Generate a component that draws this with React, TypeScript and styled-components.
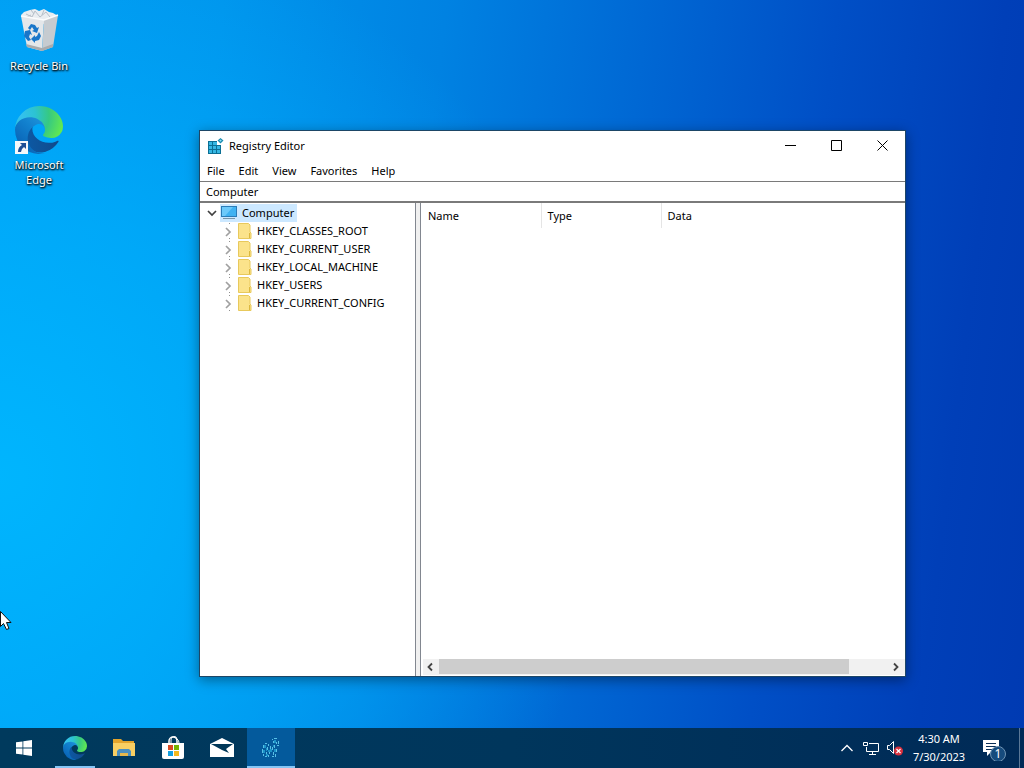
import React from "react";
import styled, { createGlobalStyle, css } from "styled-components";

const GlobalStyle = createGlobalStyle`
  *, *::before, *::after { box-sizing: border-box; }
  html, body { margin: 0; padding: 0; }
  body, button, input, table {
    font-family: "Noto Sans", "Open Sans", sans-serif;
    font-size: 11px;
    line-height: 18px;
  }
  button {
    margin: 0;
    padding: 0;
    border: 0;
    background: none;
    color: inherit;
    cursor: default;
  }
  svg { display: block; flex: none; }
`;

const Screen = styled.div`
  display: flex;
  flex-direction: column;
  min-height: 100vh;
  overflow: hidden;
  background:
    radial-gradient(ellipse 60% 75% at 0% 62%, rgba(0, 184, 255, 0.9) 0%, rgba(0, 180, 255, 0.6) 45%, rgba(0, 170, 250, 0) 100%),
    linear-gradient(97deg, #009cf2 0%, #0094ec 20%, #0082e2 40%, #0068d4 58%, #004fc6 75%, #003fb8 90%, #003ab2 100%);
`;

const Desktop = styled.main`
  position: relative;
  flex: 1;
  padding: 6px 1px;
`;

const Shortcuts = styled.nav`
  display: flex;
  flex-direction: column;
  width: 76px;
  gap: 26px;
`;

const Shortcut = styled.button`
  display: flex;
  flex-direction: column;
  align-items: center;
  gap: 3px;
  min-height: 74px;
  color: #fff;
  font-size: 11px;
  line-height: 15px;
  text-shadow: 0 1px 2px #000, 1px 1px 2px #000;
`;

const Pointer = styled.svg`
  position: absolute;
  left: 0;
  top: 611px;
`;

const Window = styled.section`
  position: absolute;
  inset: 130px 118px 51px 199px;
  display: flex;
  flex-direction: column;
  border: 1px solid #1d4666;
  background: #fff;
  color: #000;
  box-shadow: 0 3px 12px rgba(0, 0, 0, 0.4);
`;

const TitleBar = styled.header`
  display: flex;
  align-items: center;
  gap: 5px;
  height: 30px;
  padding-left: 8px;
`;

const Title = styled.h1`
  flex: 1;
  margin: 0;
  font-size: 11px;
  font-weight: 400;
`;

const WindowControls = styled.div`
  display: flex;
  align-self: flex-start;
`;

const WindowButton = styled.button`
  display: grid;
  place-items: center;
  width: 46px;
  height: 29px;
`;

const MenuBar = styled.nav`
  display: flex;
  height: 20px;
`;

const MenuButton = styled.button`
  padding: 0 7px;
`;

const AddressBar = styled.input`
  height: 22px;
  padding: 0 6px;
  border: solid #7a7a7a;
  border-width: 1px 0 2px;
  outline: 0;
  background: #fff;
  color: #000;
`;

const Panes = styled.div`
  display: flex;
  flex: 1;
  min-height: 0;
`;

const TreePane = styled.div`
  width: 215px;
  padding-top: 1px;
`;

const Splitter = styled.div`
  width: 6px;
  border: solid #828790;
  border-width: 0 1px;
  background: #f0f0f0;
`;

const Tree = styled.ul`
  margin: 0;
  padding: 0;
  list-style: none;
`;

const TreeRow = styled.div<{ $depth: number }>`
  display: flex;
  align-items: center;
  height: 18px;
  padding-left: ${(p) => 4 + p.$depth * 17}px;
`;

const Expander = styled.button`
  display: grid;
  place-items: center;
  width: 16px;
  height: 18px;
`;

const TreeLabel = styled.span<{ $selected?: boolean }>`
  display: flex;
  align-items: center;
  gap: 5px;
  height: 18px;
  padding: 0 3px 0 1px;
  ${(p) => p.$selected && css`background: #cce8ff;`}
`;

const ValuePane = styled.div`
  display: flex;
  flex: 1;
  flex-direction: column;
  min-width: 0;
  padding-bottom: 1px;
`;

const ValueArea = styled.div`
  flex: 1;
`;

const ValueTable = styled.table`
  width: 100%;
  border-collapse: collapse;
  table-layout: fixed;
`;

const ColumnHead = styled.th<{ $width?: number }>`
  width: ${(p) => (p.$width ? `${p.$width}px` : "auto")};
  height: 25px;
  padding: 0 7px;
  font-weight: 400;
  text-align: left;
  & + & { padding-left: 6px; border-left: 1px solid #e5e5e5; }
`;

const ScrollBar = styled.div`
  display: flex;
  height: 16px;
  margin-left: 2px;
  background: #f1f1f1;
`;

const ScrollButton = styled.button`
  display: grid;
  place-items: center;
  width: 16px;
`;

const ScrollTrack = styled.div`
  flex: 1;
`;

const ScrollThumb = styled.div`
  width: 91%;
  height: 15px;
  background: #cdcdcd;
`;

const TaskBar = styled.footer`
  display: flex;
  height: 40px;
  background: linear-gradient(90deg, #003a5d 0%, #00365c 50%, #002a57 100%);
  color: #fff;
`;

const PinnedApps = styled.nav`
  display: flex;
  flex: 1;
  gap: 1px;
  padding-left: 3px;
`;

const TaskButton = styled.button<{ $open?: boolean; $active?: boolean }>`
  position: relative;
  display: grid;
  place-items: center;
  width: 48px;
  background: ${(p) => (p.$active ? "#045a9c" : "transparent")};
  ${(p) =>
    (p.$open || p.$active) &&
    css`
      &::after {
        content: "";
        position: absolute;
        inset: auto ${p.$active ? 0 : 4}px 0;
        height: 2px;
        background: #85c5f5;
      }
    `}
`;

const Tray = styled.div`
  display: flex;
`;

const TrayButton = styled.button`
  display: grid;
  place-items: center;
  width: 24px;
`;

const Clock = styled.button`
  width: 64px;
  padding: 2px 0;
  text-align: center;
  & time { display: block; }
`;

const ActionButton = styled.button`
  display: grid;
  place-items: center;
  width: 48px;
  padding-right: 3px;
`;

const ShowDesktop = styled.button`
  width: 5px;
  border-left: 1px solid #5b7896;
`;

function EdgeLogo({ size, id }: { size: number; id: string }) {
  return (
    <svg width={size} height={size} viewBox="0 0 256 256" aria-hidden="true">
      <defs>
        <linearGradient id={`${id}-navy`} x1="63" y1="178" x2="241" y2="178" gradientUnits="userSpaceOnUse">
          <stop offset="0" stopColor="#0c59a4" />
          <stop offset="1" stopColor="#114a8b" />
        </linearGradient>
        <linearGradient id={`${id}-blue`} x1="157" y1="100" x2="46" y2="222" gradientUnits="userSpaceOnUse">
          <stop offset="0" stopColor="#1b8fd8" />
          <stop offset="0.4" stopColor="#117fcd" />
          <stop offset="1" stopColor="#0a66b8" />
        </linearGradient>
        <radialGradient id={`${id}-green`} cx="30" cy="55" r="240" gradientUnits="userSpaceOnUse">
          <stop offset="0" stopColor="#35c1f1" />
          <stop offset="0.35" stopColor="#2cc3d2" />
          <stop offset="0.65" stopColor="#36c982" />
          <stop offset="1" stopColor="#66eb4c" />
        </radialGradient>
      </defs>
      <g transform="translate(-4.6 -5)">
        <path
          fill={`url(#${id}-navy)`}
          d="M231 190.5c-3.4 1.8-6.9 3.4-10.5 4.7a101.5 101.5 0 0 1-35.6 6.4c-47 0-87.9-32.3-87.9-73.8a31.5 31.5 0 0 1 16.4-27.3c-42.5 1.8-53.4 46.1-53.4 72 0 73.4 67.6 80.8 82.1 80.8 7.9 0 19.7-2.3 26.7-4.6l1.3-.4a128.3 128.3 0 0 0 66.6-52.8 4 4 0 0 0-5.7-5z"
        />
        <path
          fill={`url(#${id}-blue)`}
          d="M110.3 246.3A79.2 79.2 0 0 1 87.6 225a80.7 80.7 0 0 1 29.5-120c3.2-1.5 8.5-4.1 15.6-4a32.4 32.4 0 0 1 25.7 13 31.9 31.9 0 0 1 6.3 18.7c0-.2 24.5-79.6-80-79.6-43.9 0-80 41.7-80 78.2a130.2 130.2 0 0 0 12.1 56 128 128 0 0 0 156.4 67 75.5 75.5 0 0 1-62.8-8z"
        />
        <path
          fill={`url(#${id}-green)`}
          d="M156.9 153.8c-.8 1-3.4 2.5-3.4 5.6 0 2.6 1.7 5.2 4.8 7.3 14.3 10 41.4 8.6 41.5 8.6a59.6 59.6 0 0 0 30.3-8.3 61.4 61.4 0 0 0 30.4-52.9c.3-22.4-8-37.3-11.3-43.9C228 28.8 182.3 5 132.6 5a128 128 0 0 0-128 126.2c.5-36.5 36.8-66 80-66 3.5 0 23.5.3 42 10a72.6 72.6 0 0 1 30.9 29.3c6.1 10.6 7.2 24.1 7.2 29.5s-2.7 13.3-7.8 19.9z"
        />
      </g>
    </svg>
  );
}

const EdgeShortcutArt = styled.span`
  position: relative;
  display: block;
`;

const ShortcutArrow = styled.svg`
  position: absolute;
  left: 0;
  bottom: 0;
`;

function RecycleBinArt() {
  return (
    <svg width="48" height="49" viewBox="0 0 48 49" aria-hidden="true">
      <path d="m6 9 3-3 6-2 5-1 4 2 5-2 5 3 4 1 5 3-14 8-20-4z" fill="#e9edf1" />
      <path d="m11 8 6 3 3-6 5 6 6-5 4 5M16 4l3 4M29 4l-2 5M10 12l6-3" stroke="#b6bfc8" fill="none" />
      <path d="m6 10 23 4-2 31-15-4z" fill="#e4e7ea" />
      <path d="m29 14 14-5-5 32-11 4z" fill="#c6cbd0" />
      <path d="m6 10 23 4 14-5" stroke="#fbfcfd" fill="none" strokeWidth="1.400" />
      <path d="m11 38 16 4 11-4v3l-11 4-15-4z" fill="#a9abad" />
      <g fill="#1976c9">
        <path d="m13 22 3-4 4 1 2 3 2-1-2 6-5-2 2-1-2-3-2 3z" />
        <path d="m10 25 5-1 2 5-2-1-1 3 2 3-3 1-4-5z" />
        <path d="m24 26 2 4-2 4-4 1v2l-4-4 4-4v2l2-1z" />
      </g>
    </svg>
  );
}

function RegistryIcon() {
  return (
    <svg width="16" height="16" viewBox="0 0 16 16" aria-hidden="true">
      <path d="M0 3h9v4h4v9H0z" fill="#0b6f94" />
      <g fill="#35b7e3">
        <path d="M1 4h3v3H1zM5 4h4v3H5zM1 8h3v3H1zM5 8h3v3H5zM9 8h3v3H9zM1 12h3v3H1zM5 12h3v3H5zM9 12h3v3H9z" />
      </g>
      <path d="m12.500 0 3 2.500-3 3-3-3z" fill="#1b8bb0" />
      <path d="m12.500 1.500 1.200 1-1.200 1.200-1.200-1.200z" fill="#8fe4fb" />
    </svg>
  );
}

function ComputerIcon() {
  return (
    <svg width="16" height="14" viewBox="0 0 16 14" aria-hidden="true">
      <path d="M0 0h16v11H0z" fill="#2a7cb8" />
      <path d="M1 1h14v9H1z" fill="#3fb2f2" />
      <path d="M1 1h11l-8 9H1z" fill="#6cc9fa" />
      <path d="M2 12h12v1H2z" fill="#7895a8" />
    </svg>
  );
}

function FolderIcon() {
  return (
    <svg width="14" height="16" viewBox="0 0 14 16" aria-hidden="true">
      <path d="M.5.5h10L12 2v7l1 1v5.500H.5z" fill="#fbe38b" stroke="#e8c95c" />
      <path d="M11.500 10v5" stroke="#dcb83f" />
    </svg>
  );
}

function ChevronDown() {
  return (
    <svg width="10" height="8" viewBox="0 0 10 8" aria-hidden="true">
      <path d="m1 2 4 4 4-4" fill="none" stroke="#404040" strokeWidth="1.700" />
    </svg>
  );
}

function ChevronRight() {
  return (
    <svg width="8" height="18" viewBox="0 0 8 18" aria-hidden="true">
      <path d="m1 6 4 4-4 4" fill="none" stroke="#a0a0a0" strokeWidth="1.700" />
      <path d="M4 1h1v1H4zM4 16h1v1H4z" fill="#909090" />
    </svg>
  );
}

function ScrollArrow({ back }: { back?: boolean }) {
  return (
    <svg width="8" height="10" viewBox="0 0 8 10" aria-hidden="true">
      <path d={back ? "M5 1.500 1.500 5 5 8.500" : "M1 1.500 4.500 5 1 8.500"} fill="none" stroke="#444" strokeWidth="1.800" />
    </svg>
  );
}

function WindowsLogo() {
  return (
    <svg width="16" height="16" viewBox="0 0 16 16" fill="#fff" aria-hidden="true">
      <path d="M0 2.300 6.500 1.400v6.200H0zM7.300 1.300 16 0v7.600H7.300zM0 8.400h6.500v6.200L0 13.700zM7.300 8.400H16V16l-8.700-1.300z" />
    </svg>
  );
}

function ExplorerIcon() {
  return (
    <svg width="22" height="20" viewBox="0 0 22 20" aria-hidden="true">
      <path d="M0 1h8l2 2h11v4H0z" fill="#e3a42c" />
      <path d="M0 5h22v13H0z" fill="#f8cf63" />
      <path d="M4 18v-5l2-2h10l2 2v5h-3v-3H7v3z" fill="#4a8fc0" />
      <path d="M7 15h8v3H7z" fill="#e5b84c" />
    </svg>
  );
}

function StoreIcon() {
  return (
    <svg width="24" height="24" viewBox="0 0 24 24" aria-hidden="true">
      <path d="M8 7V5a4 4 0 0 1 8 0v2" fill="none" stroke="#fff" strokeWidth="1.500" />
      <path d="M10 7V4a3 3 0 0 1 6-1q2 1 2 4" fill="none" stroke="#fff" />
      <path d="M1 7h22v14q0 2-2 2H3q-2 0-2-2z" fill="#fff" />
      <path d="M7 9h5v5H7z" fill="#d94a22" />
      <path d="M13 9h5v5h-5z" fill="#77b300" />
      <path d="M7 15h5v5H7z" fill="#14a0e0" />
      <path d="M13 15h5v5h-5z" fill="#f5b81c" />
    </svg>
  );
}

function MailIcon() {
  return (
    <svg width="24" height="20" viewBox="0 0 24 20" aria-hidden="true">
      <path d="M0 6 12 0l12 6v13H0z" fill="#fff" />
      <path d="M1 6h22l-7 5 3 4-7-3z" fill="#003758" />
    </svg>
  );
}

function RegistryTaskIcon() {
  return (
    <svg width="22" height="24" viewBox="0 0 22 24" aria-hidden="true">
      <g fill="#58c0e6">
        <path d="M3 9h1v3H3zM2 13h1v4H2zM3 18h1v2H3zM5 7h2v1H5zM8 8h1v2H8zM7 11h1v3H7zM6 16h1v2H6zM5 20h2v1H5zM10 10h1v3h-1zM9 15h1v3H9zM8 19h1v2H8zM12 20h2v1h-2zM13 16h1v3h-1zM12 11h1v3h-1zM15 18h1v3h-1zM16 13h1v3h-1zM14 9h1v3h-1zM17 9h2v1h-2zM18 5h1v3h-1zM16 6h1v2h-1zM13 5h1v2h-1zM14 2h3v1h-3zM12 3h1v1h-1z" />
      </g>
      <g fill="#1c93c8">
        <path d="M4 9h2v3H4zM3 14h2v3H3zM8 14h2v2H8zM10 13h2v3h-2zM14 13h2v3h-2zM13 9h1v2h-1zM14 4h2v3h-2zM6 12h1v3H6zM6 18h2v2H6z" />
      </g>
    </svg>
  );
}

function NetworkIcon() {
  return (
    <svg width="17" height="15" viewBox="0 0 17 15" fill="none" stroke="#fff" aria-hidden="true">
      <path d="M6 2.500h9.500v8H3.500V6M9.500 11v3M6 13.500h7" />
      <path d="M.5 1.500h4v3h-4z" />
    </svg>
  );
}

function VolumeIcon() {
  return (
    <svg width="17" height="16" viewBox="0 0 17 16" aria-hidden="true">
      <path d="M.5 5.500h2l4-4v12l-4-4h-2z" fill="none" stroke="#fff" />
      <circle cx="11.500" cy="11" r="4.500" fill="#d9303e" />
      <path d="m9.500 9 4 4m0-4-4 4" stroke="#fff" strokeWidth="1.200" />
    </svg>
  );
}

function NotificationIcon() {
  return (
    <svg width="24" height="26" viewBox="0 0 24 26" aria-hidden="true">
      <path d="M1 5h16v12H9l-4 4v-4H1z" fill="#fff" />
      <path d="M4 8.500h10M4 11.500h10M4 14.500h6" stroke="#0b2f57" />
      <circle cx="16" cy="19" r="7.500" fill="#164b7d" stroke="#6f94b4" />
      <text x="16" y="23" fill="#fff" fontFamily="Noto Sans, sans-serif" fontSize="12" textAnchor="middle">1</text>
    </svg>
  );
}

const hives = ["HKEY_CLASSES_ROOT", "HKEY_CURRENT_USER", "HKEY_LOCAL_MACHINE", "HKEY_USERS", "HKEY_CURRENT_CONFIG"];
const menus = ["File", "Edit", "View", "Favorites", "Help"];

function RegistryEditor() {
  return (
    <Window aria-label="Registry Editor">
      <TitleBar>
        <RegistryIcon />
        <Title>Registry Editor</Title>
        <WindowControls>
          <WindowButton aria-label="Minimize">
            <svg width="11" height="11" stroke="#000"><path d="M0 5.500h11" /></svg>
          </WindowButton>
          <WindowButton aria-label="Maximize">
            <svg width="11" height="11" stroke="#000" fill="none"><path d="M.5 .5h10v10H.5z" /></svg>
          </WindowButton>
          <WindowButton aria-label="Close">
            <svg width="11" height="11" stroke="#000"><path d="m.5.5 10 10m0-10-10 10" /></svg>
          </WindowButton>
        </WindowControls>
      </TitleBar>
      <MenuBar>
        {menus.map((m) => <MenuButton key={m}>{m}</MenuButton>)}
      </MenuBar>
      <AddressBar aria-label="Address" defaultValue="Computer" />
      <Panes>
        <TreePane>
          <Tree>
            <li>
              <TreeRow $depth={0}>
                <Expander aria-label="Collapse Computer"><ChevronDown /></Expander>
                <TreeLabel $selected><ComputerIcon />Computer</TreeLabel>
              </TreeRow>
              <Tree>
                {hives.map((h) => (
                  <li key={h}>
                    <TreeRow $depth={1}>
                      <Expander aria-label={`Expand ${h}`}><ChevronRight /></Expander>
                      <TreeLabel><FolderIcon />{h}</TreeLabel>
                    </TreeRow>
                  </li>
                ))}
              </Tree>
            </li>
          </Tree>
        </TreePane>
        <Splitter />
        <ValuePane>
          <ValueArea>
            <ValueTable>
              <thead>
                <tr>
                  <ColumnHead $width={120}>Name</ColumnHead>
                  <ColumnHead $width={120}>Type</ColumnHead>
                  <ColumnHead>Data</ColumnHead>
                </tr>
              </thead>
            </ValueTable>
          </ValueArea>
          <ScrollBar>
            <ScrollButton aria-label="Scroll left"><ScrollArrow back /></ScrollButton>
            <ScrollTrack><ScrollThumb /></ScrollTrack>
            <ScrollButton aria-label="Scroll right"><ScrollArrow /></ScrollButton>
          </ScrollBar>
        </ValuePane>
      </Panes>
    </Window>
  );
}

export default function App() {
  return (
    <>
      <GlobalStyle />
      <Screen>
        <Desktop>
          <Shortcuts>
            <Shortcut>
              <RecycleBinArt />
              Recycle Bin
            </Shortcut>
            <Shortcut>
              <EdgeShortcutArt>
                <EdgeLogo size={48} id="desk" />
                <ShortcutArrow width="13" height="13" viewBox="0 0 13 13">
                  <path d="M0 0h13v13H0z" fill="#f6f8fa" />
                  <path d="M5 2h6v6L9 6q-3 2-3 5H3q0-5 4-7z" fill="#1f4f95" />
                </ShortcutArrow>
              </EdgeShortcutArt>
              Microsoft Edge
            </Shortcut>
          </Shortcuts>
          <RegistryEditor />
          <Pointer width="13" height="20" viewBox="0 0 13 20" aria-hidden="true">
            <path d="M.5.5v15l3-3 3 6 2.500-1-2.500-6h4.500z" fill="#fff" stroke="#111" />
          </Pointer>
        </Desktop>
        <TaskBar>
          <TaskButton aria-label="Start"><WindowsLogo /></TaskButton>
          <PinnedApps>
            <TaskButton aria-label="Microsoft Edge" $open><EdgeLogo size={24} id="task" /></TaskButton>
            <TaskButton aria-label="File Explorer"><ExplorerIcon /></TaskButton>
            <TaskButton aria-label="Microsoft Store"><StoreIcon /></TaskButton>
            <TaskButton aria-label="Mail"><MailIcon /></TaskButton>
            <TaskButton aria-label="Registry Editor" $active><RegistryTaskIcon /></TaskButton>
          </PinnedApps>
          <Tray>
            <TrayButton aria-label="Show hidden icons">
              <svg width="12" height="8" fill="none" stroke="#fff" strokeWidth="1.300"><path d="m.5 7 5.500-5.500L11.500 7" /></svg>
            </TrayButton>
            <TrayButton aria-label="Network"><NetworkIcon /></TrayButton>
            <TrayButton aria-label="Volume"><VolumeIcon /></TrayButton>
            <Clock>
              <time>4:30 AM</time>
              <time dateTime="2023-07-30">7/30/2023</time>
            </Clock>
            <ActionButton aria-label="Notifications"><NotificationIcon /></ActionButton>
            <ShowDesktop aria-label="Show desktop" />
          </Tray>
        </TaskBar>
      </Screen>
    </>
  );
}
